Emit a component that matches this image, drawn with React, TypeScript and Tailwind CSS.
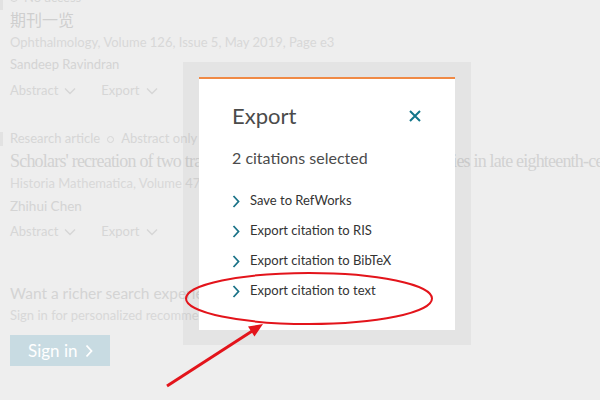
import React from 'react';

const sans = { fontFamily: 'Lato, "Open Sans", "Noto Sans CJK SC", sans-serif' };
const serif = { fontFamily: '"Liberation Serif", "DejaVu Serif", serif' };

const Caret = ({ className = '' }: { className?: string }) => (
  <svg viewBox="0 0 12 8" className={className} fill="none" stroke="currentColor" strokeWidth="1.4">
    <path d="M1 1.5l5 5 5-5" />
  </svg>
);

const Chevron = ({ className = '' }: { className?: string }) => (
  <svg viewBox="0 0 8 13" className={className} fill="none" stroke="currentColor" strokeWidth="1.8">
    <path d="M1.5 1l5 5.5-5 5.5" />
  </svg>
);

const ActionRow = ({ top }: { top: string }) => (
  <div className={`flex items-center h-[24px] ${top} text-[13px] text-[#d6d6d6]`}>
    <span>Abstract</span>
    <Caret className="w-[12px] h-[8px] ml-[6px]" />
    <span className="ml-[25px]">Export</span>
    <Caret className="w-[12px] h-[8px] ml-[7px]" />
  </div>
);

const exportOptions = [
  'Save to RefWorks',
  'Export citation to RIS',
  'Export citation to BibTeX',
  'Export citation to text',
];

// the frame is see-through, so the list behind it still shows
const ExportModal = () => (
  <div className="absolute left-[183px] top-[62px] w-[288px] h-[283px] bg-black/[0.04] px-[16px] pt-[15px]">
    <div className="w-[256px] h-[253px] bg-white border-t-2 border-[#f08a46] pl-[33px] pr-[34px]" style={sans}>
      <div className="flex items-center justify-between h-[26px] mt-[24px]">
        <h2 className="text-[22px] leading-[26px] text-[#4b4b4b]">Export</h2>
        <svg viewBox="0 0 12 12" className="w-[12px] h-[12px] text-[#12768a]" fill="none" stroke="currentColor" strokeWidth="2">
          <path d="M1 1l10 10M11 1L1 11" />
        </svg>
      </div>
      <p className="mt-[18px] text-[16px] leading-[22px] text-[#4b4b4b]">2 citations selected</p>
      <ul className="mt-[17px]">
        {exportOptions.map(o => (
          <li key={o} className="flex items-center h-[30px] text-[13px] text-[#333333]">
            <Chevron className="w-[8px] h-[13px] text-[#1b7388]" />
            <span className="ml-[10px]">{o}</span>
          </li>
        ))}
      </ul>
    </div>
  </div>
);

export default function App() {
  return (
    <div className="relative w-[600px] h-[400px] overflow-hidden bg-[#eeeeee]" style={sans}>
      <div className="pl-[10px] -mt-[12px]">
        {/* first result */}
        <div className="relative">
          <div className="absolute -left-[10px] top-0 w-[3px] h-[22px] bg-[#e2e2e2]" />
          <div className="flex items-center h-[20px] text-[13px] text-[#d6d6d6]">
            <span className="w-[8px] h-[8px] rounded-full border border-[#d6d6d6] mr-[6px]" />
            No access
          </div>
        </div>
        <div className="h-[24px] flex items-center text-[16px] text-[#cfcfcf]">期刊一览</div>
        <div className="h-[22px] flex items-center text-[13px] text-[#d8d8d8]">Ophthalmology, Volume 126, Issue 5, May 2019, Page e3</div>
        <div className="h-[22px] flex items-center text-[13px] text-[#d4d4d4]">Sandeep Ravindran</div>
        <ActionRow top="mt-[3px]" />

        {/* second result */}
        <div className="relative mt-[26px]">
          <div className="absolute -left-[10px] top-[3px] w-[3px] h-[14px] bg-[#e2e2e2]" />
          <div className="flex items-center h-[20px] text-[13px] text-[#d6d6d6]">
            Research article
            <span className="w-[7px] h-[7px] rounded-full border border-[#d6d6d6] mx-[7px]" />
            Abstract only
          </div>
        </div>
        <div className="h-[24px] flex items-center text-[18px] tracking-[-0.8px] text-[#d2d2d2] whitespace-nowrap" style={serif}>
          Scholars' recreation of two traditional Chinese arithmetic commentaries in late eighteenth-century China
        </div>
        <div className="h-[22px] flex items-center text-[13px] text-[#d8d8d8] whitespace-nowrap">Historia Mathematica, Volume 47, May 2019, Pages 1-20</div>
        <div className="h-[22px] flex items-center text-[13.5px] text-[#d4d4d4]">Zhihui Chen</div>
        <ActionRow top="mt-[3px]" />

        {/* sign-in prompt */}
        <div className="mt-[38px] h-[24px] flex items-center text-[15.5px] text-[#d4d4d4] whitespace-nowrap">Want a richer search experience? Sign in</div>
        <div className="h-[20px] flex items-center text-[13px] text-[#d8d8d8] whitespace-nowrap">Sign in for personalized recommendations, search alerts and more.</div>
        <button className="mt-[9px] w-[100px] h-[31px] bg-[#c8dbe2] text-white text-[17px] flex items-center pl-[18px]">
          Sign in
          <Chevron className="w-[8px] h-[14px] ml-[8px]" />
        </button>
      </div>

      <ExportModal />

      {/* red callout */}
      <svg className="absolute inset-0 pointer-events-none" width="600" height="400" viewBox="0 0 600 400">
        <ellipse cx="309" cy="298.5" rx="123" ry="25.5" fill="none" stroke="#e3141b" strokeWidth="2" />
        <line x1="167" y1="386" x2="253" y2="330.5" stroke="#e3141b" strokeWidth="3" />
        <polygon points="263,324 254.5,336.6 248,326.6" fill="#e3141b" />
      </svg>
    </div>
  );
}
